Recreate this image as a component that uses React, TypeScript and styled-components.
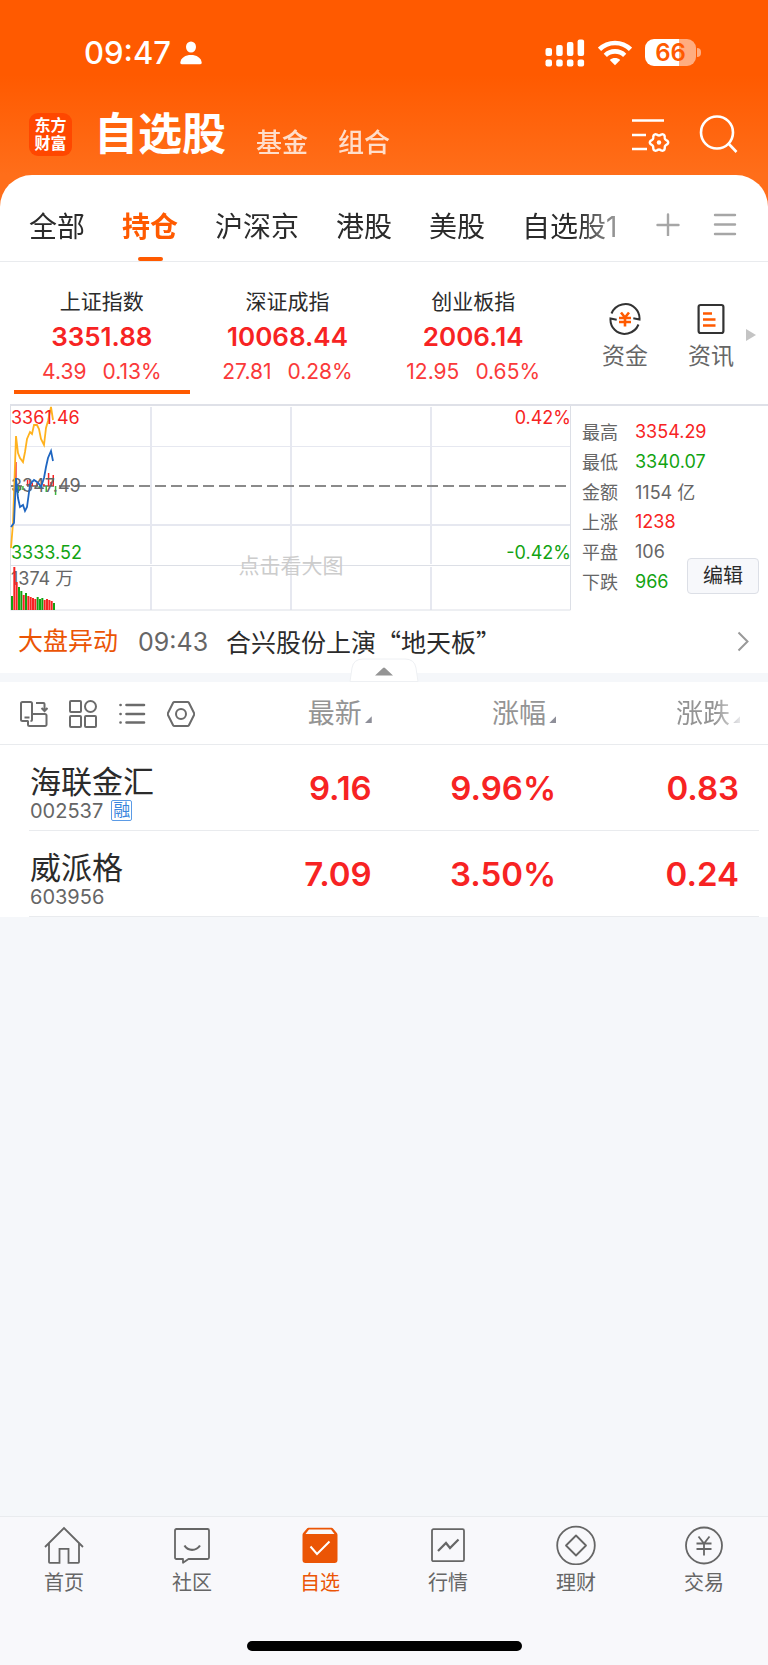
import React from "react";
import styled, { createGlobalStyle, css } from "styled-components";

const color = {
  brand: "#ff5a00",
  brandDeep: "#eb5505",
  rise: "#f72323",
  fall: "#12a312",
  ink: "#2b2b2b",
  text: "#666666",
  muted: "#949494",
  line: "#e9ebee",
  canvas: "#f5f7fa",
};

const GlobalStyle = createGlobalStyle`
  *, *::before, *::after { box-sizing: border-box; }
  body {
    margin: 0;
    background: ${color.canvas};
    color: ${color.ink};
    font-family: Inter, "Noto Sans CJK SC", sans-serif;
  }
  button { border: 0; padding: 0; background: none; color: inherit; font: inherit; cursor: pointer; }
  a { color: inherit; text-decoration: none; }
  h1, p { margin: 0; }
  svg { display: block; flex: none; }
`;

/* ---------- page shell ---------- */

const Page = styled.div`
  display: flex;
  flex-direction: column;
  min-height: 100vh;
`;

const Header = styled.header`
  height: 215px;
  margin-bottom: -40px;
  background: linear-gradient(${color.brand} 0, ${color.brand} 75px, #ff6e1a 175px);
  color: #fff;
`;

const Sheet = styled.main`
  position: relative;
  background: #fff;
  border-radius: 32px 32px 0 0;
`;

/* ---------- status bar ---------- */

const StatusBar = styled.div`
  display: flex;
  align-items: center;
  justify-content: space-between;
  height: 104px;
  padding: 1px 67px 0 84px;
`;

const StatusGroup = styled.div<{ $gap: number }>`
  display: flex;
  align-items: center;
  gap: ${(p) => p.$gap}px;
`;

const Clock = styled.time`
  font-size: 31px;
  font-weight: 500;
  line-height: 36px;
`;

const Battery = styled.span`
  display: flex;
  align-items: center;
  justify-content: center;
  width: 51px;
  height: 27px;
  border-radius: 9px;
  background: linear-gradient(90deg, #fff 66%, rgba(255, 255, 255, 0.5) 66%);
  color: ${color.brand};
  font-size: 24px;
  font-weight: 600;
  line-height: 27px;
`;

const BatteryCell = styled.span`
  display: flex;
  align-items: center;
  gap: 1px;

  &::after {
    content: "";
    width: 4px;
    height: 9px;
    border-radius: 0 5px 5px 0;
    background: rgba(255, 255, 255, 0.5);
  }
`;

/* ---------- title bar ---------- */

const TitleBar = styled.div`
  display: flex;
  align-items: center;
  height: 60px;
  padding: 0 29px;
`;

const Logo = styled.span`
  display: grid;
  place-content: center;
  width: 43px;
  height: 43px;
  border-radius: 9px;
  background: #ff4700;
  font-size: 16px;
  font-weight: 700;
  line-height: 18px;
`;

const TitleNav = styled.nav`
  display: flex;
  flex: 1;
  align-items: flex-end;
  gap: 30px;
  padding-left: 22px;
`;

const Title = styled.h1`
  font-size: 44px;
  font-weight: 600;
  line-height: 60px;
`;

const TitleLink = styled.a`
  font-size: 26px;
  font-weight: 500;
  line-height: 42px;
  opacity: 0.78;
`;

const TitleActions = styled.div`
  display: flex;
  gap: 28px;
`;

/* ---------- group tabs ---------- */

const Tabs = styled.nav`
  display: flex;
  align-items: center;
  height: 87px;
  padding: 12px 31px 0 29px;
  border-bottom: 1px solid ${color.line};
`;

const TabList = styled.div`
  display: flex;
  flex: 1;
  gap: 37px;
  overflow: hidden;
  height: 100%;
  mask-image: linear-gradient(90deg, #000 548px, rgba(0, 0, 0, 0.3) 600px);
`;

const Tab = styled.a<{ $active?: boolean }>`
  display: flex;
  flex-direction: column;
  align-items: center;
  justify-content: space-between;
  padding-top: 16px;
  font-size: 28px;
  line-height: 48px;
  white-space: nowrap;

  ${(p) =>
    p.$active &&
    css`
      color: ${color.brand};
      font-weight: 600;

      &::after {
        content: "";
        width: 25px;
        height: 4px;
        border-radius: 2px;
        background: ${color.brand};
      }
    `}
`;

const TabActions = styled.div`
  display: flex;
  gap: 33px;
`;

/* ---------- index cards ---------- */

const IndexBar = styled.section`
  display: flex;
  align-items: stretch;
  padding: 0 12px 10px 14px;
`;

const IndexList = styled.div`
  display: flex;
  flex: 1;
  gap: 10px;
`;

const IndexCard = styled.button<{ $active?: boolean }>`
  display: flex;
  flex: 1;
  flex-direction: column;
  align-items: center;
  padding: 24px 0 2px;
  border-bottom: 4px solid ${(p) => (p.$active ? color.brand : "transparent")};
`;

const IndexName = styled.span`
  font-size: 21px;
  line-height: 32px;
`;

const IndexPrice = styled.strong`
  color: ${color.rise};
  font-size: 26px;
  font-weight: 600;
  line-height: 38px;
`;

const IndexChange = styled.span`
  display: flex;
  gap: 16px;
  color: #fa3a3a;
  font-size: 21px;
  line-height: 32px;
`;

const Shortcuts = styled.div`
  display: flex;
  align-items: center;
  padding-left: 21px;
`;

const Shortcut = styled.a`
  display: flex;
  flex-direction: column;
  align-items: center;
  gap: 3px;
  width: 86px;
  padding-top: 18px;
  color: ${color.text};
  font-size: 23px;
  line-height: 34px;
`;

const MoreArrow = styled.svg`
  margin: 14px 0 0 -8px;
`;

/* ---------- chart panel ---------- */

const ChartPanel = styled.section`
  display: flex;
  padding-left: 10px;
`;

const ChartBox = styled.div`
  flex: 1;

  svg {
    width: 100%;
    height: auto;
  }
`;

const Stats = styled.div`
  position: relative;
  width: 197px;
  padding: 10px 0 0 11px;
  border-top: 2px solid #dfe1e8;
`;

const StatTable = styled.table`
  border-collapse: collapse;
  font-size: 18px;

  th {
    width: 53px;
    padding: 0;
    color: ${color.text};
    font-weight: 400;
    text-align: left;
  }

  tr {
    height: 30px;
  }
`;

const StatValue = styled.td<{ $tone?: "rise" | "fall" }>`
  padding: 0;
  color: ${(p) => (p.$tone ? color[p.$tone] : color.text)};
`;

const EditButton = styled.button`
  position: absolute;
  right: 9px;
  bottom: 17px;
  width: 72px;
  height: 36px;
  border: 1px solid #dcdfe6;
  border-radius: 4px;
  background: #f7f8fb;
  font-size: 20px;
  line-height: 32px;
`;

/* ---------- market news ---------- */

const News = styled.a`
  display: flex;
  align-items: center;
  gap: 18px;
  height: 62px;
  padding: 0 19px 0 18px;
  font-size: 25px;
  line-height: 32px;
`;

const NewsTag = styled.span`
  padding-bottom: 2px;
  color: ${color.brandDeep};
`;

const NewsTime = styled.time`
  padding-left: 2px;
  color: ${color.text};
`;

const NewsTitle = styled.span`
  flex: 1;
  padding-bottom: 2px;
  font-family: "Noto Sans CJK SC", sans-serif;
`;

const Divider = styled.div`
  position: relative;
  height: 9px;
  background: ${color.canvas};
`;

const Handle = styled.button`
  position: absolute;
  left: 50%;
  bottom: 0;
  transform: translateX(-50%);
`;

/* ---------- holdings ---------- */

const Holdings = styled.table`
  width: 100%;
  border-collapse: collapse;
  table-layout: fixed;
  background: #fff;
`;

const HeadRow = styled.tr`
  height: 62px;
  border-bottom: 1px solid ${color.line};
`;

const HeadCell = styled.th<{ $width: string }>`
  width: ${(p) => p.$width};
  padding: 3px 0 0;
  font-weight: 400;
  text-align: right;

  &:last-child {
    padding-right: 28px;
    mask-image: linear-gradient(90deg, #000 75%, rgba(0, 0, 0, 0.2) 87%);
  }
`;

const ViewTools = styled.div`
  display: flex;
  gap: 21px;
  padding-left: 20px;
`;

const SortButton = styled.button`
  color: ${color.muted};
  font-size: 27px;
  line-height: 40px;

  &::after {
    content: "";
    display: inline-block;
    width: 7px;
    height: 7px;
    margin-left: 3px;
    background: #8e8f99;
    clip-path: polygon(100% 0, 100% 100%, 0 100%);
  }
`;

const StockRow = styled.tr`
  height: 86px;
  background: linear-gradient(${color.line}, ${color.line}) 29px 100% / calc(100% - 38px) 1px no-repeat;
`;

const StockCell = styled.td`
  padding: 19px 0 8px 30px;
`;

const StockName = styled.p`
  font-size: 31px;
  line-height: 35px;
`;

const StockCode = styled.p`
  display: flex;
  align-items: center;
  gap: 8px;
  color: ${color.text};
  font-size: 20px;
  line-height: 24px;
`;

const MarginBadge = styled.span`
  width: 21px;
  height: 21px;
  border: 1px solid #5b9be6;
  border-radius: 2px;
  color: #3c86dd;
  font-size: 17px;
  line-height: 19px;
  text-align: center;
`;

const Quote = styled.td`
  padding: 0;
  color: ${color.rise};
  font-size: 33px;
  font-weight: 600;
  text-align: right;

  &:last-child {
    padding-right: 29px;
  }
`;

/* ---------- bottom bar ---------- */

const Footer = styled.footer`
  margin-top: auto;
  border-top: 1px solid ${color.line};
  background: #f8f8fb;
`;

const BottomNav = styled.nav`
  display: grid;
  grid-template-columns: repeat(6, 1fr);
  padding-top: 8px;
`;

const NavItem = styled.a<{ $active?: boolean }>`
  display: flex;
  flex-direction: column;
  align-items: center;
  gap: 2px;
  color: ${(p) => (p.$active ? color.brandDeep : color.text)};
  font-size: 20px;
  line-height: 32px;
`;

const HomeIndicator = styled.div`
  width: 275px;
  height: 10px;
  margin: 42px auto 14px;
  border-radius: 5px;
  background: #000;
`;

/* ---------- icons ---------- */

const PersonIcon = () => (
  <svg width="22" height="24" viewBox="0 0 22 24" fill="#fff">
    <ellipse cx="11" cy="6" rx="5" ry="5.6" />
    <path d="M0.3 21.5C1 16.5 5.5 14 11 14s10 2.500 10.700 7.500c.1 1-.5 1.700-1.500 1.700H1.800C.8 23.200.2 22.500.3 21.500Z" />
  </svg>
);

const SignalIcon = () => (
  <svg width="40" height="28" viewBox="0 0 40 28" fill="#fff">
    <rect x="0.500" y="9" width="6.500" height="8" rx="2" />
    <rect x="11.200" y="6" width="6.500" height="11" rx="2" />
    <rect x="21.900" y="3" width="6.500" height="14" rx="2" />
    <rect x="32.600" y="0.500" width="6.500" height="16.500" rx="2" />
    {[0.5, 11.2, 21.9, 32.6].map((x) => (
      <rect key={x} x={x} y="20.500" width="6.500" height="7" rx="2" />
    ))}
  </svg>
);

const WifiIcon = () => (
  <svg width="34" height="26" viewBox="0 0 34 26" fill="none" stroke="#fff" strokeWidth="4.600">
    <path d="M1.500 9.300C10 .8 24 .8 32.500 9.300" />
    <path d="M7.300 15.300C12.700 10 21.300 10 26.700 15.300" />
    <path d="M17 25.300l-5.200-5.400c3-2.600 7.400-2.600 10.400 0Z" fill="#fff" stroke="none" />
  </svg>
);

// Outline of a soft six-lobed cog around (28, 28.5).
const cogPoints = Array.from({ length: 72 }, (_, i) => {
  const a = (i * Math.PI) / 36;
  const r = 8.1 + 1.1 * Math.cos(6 * a);
  return `${(28 + r * Math.cos(a)).toFixed(2)},${(28.5 + r * Math.sin(a)).toFixed(2)}`;
}).join(" ");

const ListSettingsIcon = () => (
  <svg width="40" height="40" viewBox="0 0 40 40" fill="none" stroke="#fff" strokeWidth="2.400">
    <path d="M1 6.500h32M1 21h14M1 35h15" />
    <polygon points={cogPoints} strokeLinejoin="round" />
    <circle cx="28" cy="28.500" r="2.200" fill="#fff" stroke="none" />
  </svg>
);

const SearchIcon = () => (
  <svg width="40" height="40" viewBox="0 0 40 40" fill="none" stroke="#fff" strokeWidth="2.600">
    <circle cx="18" cy="18.500" r="16" />
    <path d="M29 29l8.500 9" />
  </svg>
);

const PlusIcon = () => (
  <svg width="24" height="24" viewBox="0 0 24 24" stroke="#a6a6a6" strokeWidth="2.400" strokeLinecap="round">
    <path d="M12 2.500v21M1.500 13h21" />
  </svg>
);

const MenuIcon = () => (
  <svg width="24" height="24" viewBox="0 0 24 24" stroke="#a6a6a6" strokeWidth="2.400" strokeLinecap="round">
    <path d="M2 3h20M2 12.500h20M2 22h20" />
  </svg>
);

const FundIcon = () => (
  <svg width="34" height="34" viewBox="0 0 34 34" fill="none" stroke="#333" strokeWidth="2">
    <path d="M3.500 11.500C7.500 1.800 20 -1 27.300 6.200c3 3 4.500 7 4.200 11.300l-6.200-1.200" />
    <path d="M30.500 22.500C26.500 32.200 14 35 6.700 27.800c-3-3-4.500-7-4.200-11.300l6.200 1.200" />
    <path stroke={color.brand} strokeWidth="2.600" d="M13 10.500l4 5 4-5M11 16h12M11 20h12M17 15v9.500" />
  </svg>
);

const NewsIcon = () => (
  <svg width="34" height="34" viewBox="0 0 34 34" fill="none" stroke="#333" strokeWidth="2.200">
    <rect x="4.600" y="3" width="24.800" height="28" rx="2" />
    <path stroke={color.brand} strokeWidth="2.600" d="M9 11.500h9M9 17.500h12.500M9 23.500h12.500" />
  </svg>
);

const ChevronIcon = () => (
  <svg width="12" height="22" viewBox="0 0 12 22" fill="none" stroke="#999" strokeWidth="2">
    <path d="M1.500 1.500l9 9-9 9" />
  </svg>
);

const toolProps = {
  width: 28,
  height: 28,
  viewBox: "0 0 28 28",
  fill: "none",
  stroke: "#6b6b6b",
  strokeWidth: 2,
};

const RotateIcon = () => (
  <svg {...toolProps}>
    <path d="M8.500 21H2.500A1.500 1.500 0 0 1 1 19.500v-16A1.500 1.500 0 0 1 2.500 2h8A1.500 1.500 0 0 1 12 3.500V14" />
    <path d="M8 21v3.500A1.500 1.500 0 0 0 9.500 26H25a1.500 1.500 0 0 0 1.500-1.500v-9A1.500 1.500 0 0 0 25 14H12v5.500q0 1.500-1.500 1.500M4.500 17.500h5M16 3h7.500q1 0 1 1v7M21.500 8l3 3 3-3" />
  </svg>
);

const GridIcon = () => (
  <svg {...toolProps}>
    <rect x="1" y="1" width="11" height="11" rx="1" />
    <circle cx="21.500" cy="6.500" r="5.500" />
    <rect x="1" y="16" width="11" height="11" rx="1" />
    <rect x="16" y="16" width="11" height="11" rx="1" />
  </svg>
);

const ListIcon = () => (
  <svg {...toolProps} strokeWidth={2.6} strokeLinecap="round">
    <path d="M8.500 5h17.500M8.500 14h17.500M8.500 22.500h17.500M2.500 5h.1M2.500 14h.1M2.500 22.500h.1" />
  </svg>
);

const HexIcon = () => (
  <svg {...toolProps}>
    <path strokeLinejoin="round" d="M7.500 2h13q1 0 1.400.8l5 10q.6 1.200 0 2.400l-5 10q-.4.8-1.400.8h-13q-1 0-1.400-.8l-5-10q-.6-1.200 0-2.400l5-10Q6.500 2 7.500 2Z" />
    <circle cx="14" cy="14" r="5" />
  </svg>
);

const navProps = {
  width: 40,
  height: 40,
  viewBox: "0 0 40 40",
  fill: "none",
  stroke: "currentColor",
  strokeWidth: 1.8,
};

const HomeIcon = () => (
  <svg {...navProps}>
    <path d="M1 22L20 3l19 19M5 18.500V37q0 .8.800.8H15.500V23.800h9V37.800h9.700q.8 0 .8-.8V18.500" />
  </svg>
);

const ChatIcon = () => (
  <svg {...navProps}>
    <path
      strokeLinejoin="round"
      d="M4.500 4h31q1.500 0 1.500 1.500v27q0 1.500-1.500 1.500H16.500l-5.500 3.800V34H4.500Q3 34 3 32.500v-27Q3 4 4.500 4Z"
    />
    <path strokeWidth="2.200" d="M12.500 20.500c3.500 5.800 11.500 5.800 15.500 0" />
  </svg>
);

const PickedIcon = () => (
  <svg {...navProps}>
    <path
      fill="currentColor"
      stroke="none"
      fillRule="evenodd"
      d="M8.500 2.800h23q1 0 1.700.9l3.400 4.100q.9 1 .9 2.200v25q0 3-3 3h-29q-3 0-3-3V10q0-1.200.9-2.200l3.400-4.100q.7-.9 1.700-.9ZM9 4.500L5.500 9h29L31 4.500Z"
    />
    <path stroke="#fff" strokeWidth="2" d="M10.500 21.500l6.500 7.500 12.500-12.500" />
  </svg>
);

const TrendIcon = () => (
  <svg {...navProps}>
    <rect x="4" y="4.200" width="32" height="32" rx="1.500" />
    <path strokeWidth="2.200" d="M10 26l8-8 4 5 8.500-8.500" />
  </svg>
);

const WealthIcon = () => (
  <svg {...navProps}>
    <circle cx="20" cy="20.500" r="18.800" />
    <path strokeLinejoin="round" d="M20 10.500l10 10-10 10-10-10Z" />
  </svg>
);

const TradeIcon = () => (
  <svg {...navProps}>
    <circle cx="20" cy="20.500" r="18" />
    <path d="M14.500 11.500l5.500 7 5.500-7M12.500 18.500h15M12.500 24h15M20 18.500V30.500" />
  </svg>
);

/* ---------- intraday chart ---------- */

const averageLine =
  "1,144 3,119 6,32 8,49 10,54 13,58 15,48 17,35 20,28 22,30 24,21 27,21 29,25 31,35 34,41 36,24 38,17 41,3 43,16";
const priceLine =
  "1,123 4,119 6,74 8,94 10,103 13,101 15,107 17,103 20,81 22,78 24,76 27,78 29,80 31,83 34,74 36,63 38,54 41,47 43,57";

// Signed height of each bar around the previous close: [slot, height].
const momentum: [number, number][] = [
  [2, 24], [3, -7], [4, -4], [5, -4], [7, 6], [8, 6], [9, 3], [11, 3], [12, -2],
  [13, -3], [14, 2], [15, -6], [16, 13], [17, 4], [18, 11], [19, -9],
];

// Per-minute volume; negative values are minutes that closed lower.
const volume = [-14, 43, 28, -23, -19, 15, -17, 14, 13, 12, 11, -13, -11, -12, 10, 11, 10, 9, -7];

const slotX = (i: number) => 1 + (i * 7) / 3;

const IntradayChart = () => (
  <svg viewBox="0 0 561 207" role="img" aria-label="上证指数分时图" fontSize="18">
    <path d="M0 121h561M141 3v157M281 3v157M421 3v157M141 163v43M281 163v43M421 163v43" stroke="#e6e8f0" strokeWidth="2" />
    <path d="M0 42.500h561" stroke="#e6e8f0" strokeWidth="1" />
    <path d="M0 161.500h561M0.500 1v205H560.500V1" stroke="#dcdfe6" strokeWidth="1" fill="none" />
    <path d="M0 1h561" stroke="#dfe1e8" strokeWidth="2" />
    <path d="M1 82h560" stroke="#8a8a8a" strokeWidth="2" strokeDasharray="11 5" />
    <text x="281" y="169" fontSize="21" fill="#ccc" textAnchor="middle">点击看大图</text>
    {momentum.map(([slot, h]) => (
      <rect key={slot} x={slotX(slot) - 0.5} y={h > 0 ? 82 - h : 82} width="1.500" height={Math.abs(h)} fill={h > 0 ? color.rise : "#3cb83c"} />
    ))}
    <g fill={color.text}>
      <text x="1" y="88">3347.49</text>
      <text x="1" y="181">1374 万</text>
    </g>
    {volume.map((v, i) => (
      <rect key={i} x={slotX(i)} y={206 - Math.abs(v)} width="2" height={Math.abs(v)} fill={v > 0 ? color.rise : color.fall} />
    ))}
    <polyline points={averageLine} fill="none" stroke="#ffb21e" strokeWidth="1.800" />
    <polyline points={priceLine} fill="none" stroke="#1f66c1" strokeWidth="1.800" />
    <text x="1" y="20" fill={color.rise}>3361.46</text>
    <text x="1" y="155" fill={color.fall}>3333.52</text>
    <text x="561" y="20" fill={color.rise} textAnchor="end">0.42%</text>
    <text x="561" y="155" fill={color.fall} textAnchor="end">-0.42%</text>
  </svg>
);

/* ---------- data ---------- */

const tabs = ["全部", "持仓", "沪深京", "港股", "美股", "自选股1"];

const indices = [
  { name: "上证指数", price: "3351.88", change: "4.39", percent: "0.13%" },
  { name: "深证成指", price: "10068.44", change: "27.81", percent: "0.28%" },
  { name: "创业板指", price: "2006.14", change: "12.95", percent: "0.65%" },
];

const stats: { label: string; value: string; tone?: "rise" | "fall" }[] = [
  { label: "最高", value: "3354.29", tone: "rise" },
  { label: "最低", value: "3340.07", tone: "fall" },
  { label: "金额", value: "1154 亿" },
  { label: "上涨", value: "1238", tone: "rise" },
  { label: "平盘", value: "106" },
  { label: "下跌", value: "966", tone: "fall" },
];

const stocks = [
  { name: "海联金汇", code: "002537", margin: true, quotes: ["9.16", "9.96%", "0.83"] },
  { name: "威派格", code: "603956", margin: false, quotes: ["7.09", "3.50%", "0.24"] },
];

const viewTools = [
  { label: "横屏", Icon: RotateIcon },
  { label: "宫格", Icon: GridIcon },
  { label: "列表", Icon: ListIcon },
  { label: "设置", Icon: HexIcon },
];

const columns = [
  { label: "最新", width: "auto" },
  { label: "涨幅", width: "24%" },
  { label: "涨跌", width: "27.6%" },
];

const navItems = [
  { label: "首页", Icon: HomeIcon },
  { label: "社区", Icon: ChatIcon },
  { label: "自选", Icon: PickedIcon },
  { label: "行情", Icon: TrendIcon },
  { label: "理财", Icon: WealthIcon },
  { label: "交易", Icon: TradeIcon },
];

export default function App() {
  return (
    <Page>
      <GlobalStyle />
      <Header>
        <StatusBar>
          <StatusGroup $gap={9}>
            <Clock>09:47</Clock>
            <PersonIcon />
          </StatusGroup>
          <StatusGroup $gap={13}>
            <SignalIcon />
            <WifiIcon />
            <BatteryCell>
              <Battery>66</Battery>
            </BatteryCell>
          </StatusGroup>
        </StatusBar>
        <TitleBar>
          <Logo>
            <span>东方</span>
            <span>财富</span>
          </Logo>
          <TitleNav>
            <Title>自选股</Title>
            <TitleLink href="#fund">基金</TitleLink>
            <TitleLink href="#portfolio">组合</TitleLink>
          </TitleNav>
          <TitleActions>
            <button aria-label="列表设置"><ListSettingsIcon /></button>
            <button aria-label="搜索"><SearchIcon /></button>
          </TitleActions>
        </TitleBar>
      </Header>

      <Sheet>
        <Tabs>
          <TabList>
            {tabs.map((label) => (
              <Tab key={label} href="#tab" $active={label === "持仓"}>{label}</Tab>
            ))}
          </TabList>
          <TabActions>
            <button aria-label="添加分组"><PlusIcon /></button>
            <button aria-label="管理分组"><MenuIcon /></button>
          </TabActions>
        </Tabs>

        <IndexBar>
          <IndexList>
            {indices.map((item, i) => (
              <IndexCard key={item.name} $active={i === 0}>
                <IndexName>{item.name}</IndexName>
                <IndexPrice>{item.price}</IndexPrice>
                <IndexChange>
                  <span>{item.change}</span>
                  <span>{item.percent}</span>
                </IndexChange>
              </IndexCard>
            ))}
          </IndexList>
          <Shortcuts>
            <Shortcut href="#capital"><FundIcon />资金</Shortcut>
            <Shortcut href="#news"><NewsIcon />资讯</Shortcut>
            <MoreArrow width="10" height="14" viewBox="0 0 10 14" fill="#c4c4c4">
              <path d="M0 1l10 6-10 6Z" />
            </MoreArrow>
          </Shortcuts>
        </IndexBar>

        <ChartPanel>
          <ChartBox><IntradayChart /></ChartBox>
          <Stats>
            <StatTable>
              <tbody>
                {stats.map((s) => (
                  <tr key={s.label}>
                    <th scope="row">{s.label}</th>
                    <StatValue $tone={s.tone}>{s.value}</StatValue>
                  </tr>
                ))}
              </tbody>
            </StatTable>
            <EditButton>编辑</EditButton>
          </Stats>
        </ChartPanel>

        <News href="#market-moves">
          <NewsTag>大盘异动</NewsTag>
          <NewsTime>09:43</NewsTime>
          <NewsTitle>合兴股份上演“地天板”</NewsTitle>
          <ChevronIcon />
        </News>

        <Divider>
          <Handle aria-label="收起">
            <svg width="70" height="24" viewBox="0 0 70 24">
              <path d="M1 23.500L3 10Q4.500 1 14 1H56q9.500 0 11 9l2 13.500Z" fill="#fff" stroke="#eef0f3" />
              <path d="M26 17.500l8-7.500q1-1 2 0l8 7.500Z" fill="#949494" />
            </svg>
          </Handle>
        </Divider>

        <Holdings>
          <thead>
            <HeadRow>
              <HeadCell $width="26%">
                <ViewTools>
                  {viewTools.map(({ label, Icon }) => (
                    <button key={label} aria-label={label}><Icon /></button>
                  ))}
                </ViewTools>
              </HeadCell>
              {columns.map((c) => (
                <HeadCell key={c.label} $width={c.width} scope="col">
                  <SortButton>{c.label}</SortButton>
                </HeadCell>
              ))}
            </HeadRow>
          </thead>
          <tbody>
            {stocks.map((s) => (
              <StockRow key={s.code}>
                <StockCell>
                  <StockName>{s.name}</StockName>
                  <StockCode>
                    {s.code}
                    {s.margin && <MarginBadge>融</MarginBadge>}
                  </StockCode>
                </StockCell>
                {s.quotes.map((q) => (
                  <Quote key={q}>{q}</Quote>
                ))}
              </StockRow>
            ))}
          </tbody>
        </Holdings>
      </Sheet>

      <Footer>
        <BottomNav>
          {navItems.map(({ label, Icon }) => (
            <NavItem key={label} href="#nav" $active={label === "自选"}>
              <Icon />
              {label}
            </NavItem>
          ))}
        </BottomNav>
        <HomeIndicator />
      </Footer>
    </Page>
  );
}
